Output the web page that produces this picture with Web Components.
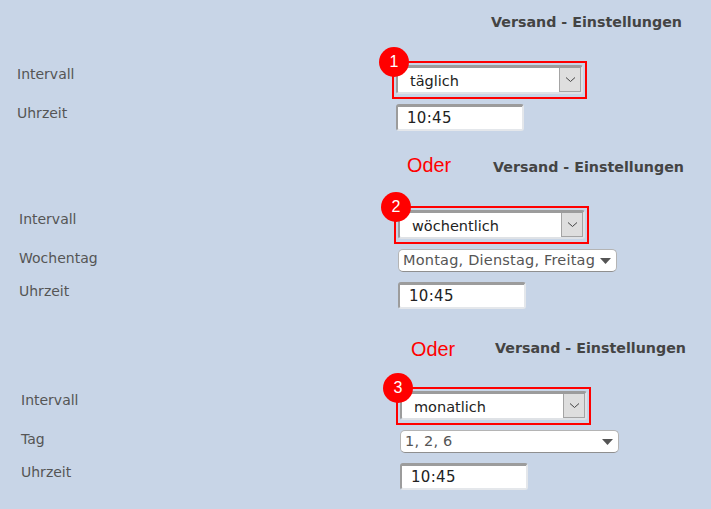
<!DOCTYPE html>
<html lang="de">
<head>
<meta charset="utf-8">
<title>Versand - Einstellungen</title>
<style>
  html, body { margin: 0; background: #c8d5e7; }
  body { width: 711px; height: 509px; overflow: hidden; font-family: "DejaVu Sans", Verdana, sans-serif; }
  main { display: flex; flex-direction: column; padding-top: 10px; }
  send-settings.second { margin: 24px 0 0 2px; --oder-gap: 7px; --oder-shift: -4px; }
  send-settings.third { margin: 27px 0 0 4px; --oder-gap: 9px; --oder-shift: 3px; }
</style>
</head>
<body>
<main>
  <send-settings>
    <setting-row label="Intervall" first><combo-select badge="1">täglich</combo-select></setting-row>
    <setting-row label="Uhrzeit"><time-field>10:45</time-field></setting-row>
  </send-settings>

  <send-settings class="second" oder>
    <setting-row label="Intervall" first><combo-select badge="2">wöchentlich</combo-select></setting-row>
    <setting-row label="Wochentag"><multi-select>Montag, Dienstag, Freitag</multi-select></setting-row>
    <setting-row label="Uhrzeit" spaced><time-field>10:45</time-field></setting-row>
  </send-settings>

  <send-settings class="third" oder>
    <setting-row label="Intervall" first><combo-select badge="3">monatlich</combo-select></setting-row>
    <setting-row label="Tag"><multi-select>1, 2, 6</multi-select></setting-row>
    <setting-row label="Uhrzeit" spaced><time-field>10:45</time-field></setting-row>
  </send-settings>
</main>

<script>
// One "Versand - Einstellungen" block: heading line, then the rows
class SendSettings extends HTMLElement {
  constructor() {
    super();
    this.attachShadow({ mode: 'open' });
  }

  connectedCallback() {
    const oder = this.hasAttribute('oder') ? '<span class="oder">Oder</span>' : '';
    this.shadowRoot.innerHTML = `
      <style>
        :host {
          display: flex;
          flex-direction: column;
          width: 682px;
        }
        .head {
          display: flex;
          align-items: center;
          height: 24px;
          margin-bottom: 27px;
          padding-left: 398px;
          box-sizing: border-box;
        }
        .oder {
          margin-left: var(--oder-gap, 9px);
          margin-top: var(--oder-shift, -4px);
          font: 19.8px "Liberation Sans", Arial, sans-serif;
          color: #ff0000;
        }
        h2 {
          margin: 0 0 0 auto;
          font: bold 14.25px "DejaVu Sans", Verdana, sans-serif;
          color: #444444;
          white-space: nowrap;
        }
        .rows {
          display: flex;
          flex-direction: column;
          gap: 5px;
        }
      </style>
      <div class="head">${oder}<h2>Versand - Einstellungen</h2></div>
      <div class="rows"><slot></slot></div>
    `;
  }
}

// Label on the left, control in the right column
class SettingRow extends HTMLElement {
  constructor() {
    super();
    this.attachShadow({ mode: 'open' });
  }

  connectedCallback() {
    this.shadowRoot.innerHTML = `
      <style>
        :host {
          display: grid;
          grid-template-columns: 375px auto;
          padding-left: 17px;
        }
        :host([spaced]) { margin-top: 5px; }
        .label {
          font-size: 14px;
          line-height: 18px;
          color: #555555;
        }
        :host([first]) .label { padding-top: 4px; }
      </style>
      <div class="label">${this.getAttribute('label')}</div>
      <div><slot></slot></div>
    `;
  }
}

// Marked-up dropdown: red frame, numbered badge, field with chevron button
class ComboSelect extends HTMLElement {
  constructor() {
    super();
    this.attachShadow({ mode: 'open' });
  }

  connectedCallback() {
    this.shadowRoot.innerHTML = `
      <style>
        :host {
          display: block;
          position: relative;
          width: 195px;
          height: 38px;
          box-sizing: border-box;
          border: 2px solid #ff0000;
          padding: 2px 2px;
        }
        .badge {
          position: absolute;
          left: -15px;
          top: -16px;
          width: 30px;
          height: 30px;
          border-radius: 50%;
          background: #ff0000;
          color: #ffffff;
          font: 16px/30px "Liberation Sans", Arial, sans-serif;
          text-align: center;
        }
        .field {
          display: flex;
          align-items: stretch;
          height: 29px;
          box-sizing: border-box;
          border-style: solid;
          border-width: 3px 2px 2px 2px;
          border-color: #9c9c9c #dfe2e6 #dfe2e6 #9c9c9c;
          border-radius: 3px;
          background: #ffffff;
        }
        .text {
          flex: 1;
          padding-left: 12px;
          font-size: 14.5px;
          line-height: 27px;
          color: #222222;
        }
        .btn {
          display: flex;
          align-items: center;
          justify-content: center;
          width: 20px;
          border: 1px solid #a4a4a4;
          border-top: 0;
          background: #dedede;
        }
      </style>
      <span class="badge">${this.getAttribute('badge')}</span>
      <div class="field">
        <div class="text"><slot></slot></div>
        <div class="btn">
          <svg width="11" height="7" viewBox="0 0 11 7"><path d="M1 1.5 L5.5 5.5 L10 1.5" fill="none" stroke="#444" stroke-width="1"/></svg>
        </div>
      </div>
    `;
  }
}

// Rounded multi-value dropdown with a solid caret
class MultiSelect extends HTMLElement {
  constructor() {
    super();
    this.attachShadow({ mode: 'open' });
  }

  connectedCallback() {
    this.shadowRoot.innerHTML = `
      <style>
        :host {
          display: flex;
          align-items: center;
          justify-content: space-between;
          width: 219px;
          height: 23px;
          box-sizing: border-box;
          margin-left: 4px;
          padding: 0 5px 2px 4px;
          border: 1px solid #b4b4b4;
          border-bottom-color: #8f8f8f;
          border-radius: 5px;
          background: #ffffff;
          font-size: 14.5px;
          letter-spacing: 0.2px;
          color: #555555;
          white-space: nowrap;
        }
        svg { flex: none; margin-top: 2px; }
      </style>
      <span><slot></slot></span>
      <svg width="11" height="6" viewBox="0 0 11 6"><path d="M0 0 H11 L5.5 6 Z" fill="#555"/></svg>
    `;
  }
}

// Time input with the old inset border
class TimeField extends HTMLElement {
  constructor() {
    super();
    this.attachShadow({ mode: 'open' });
  }

  connectedCallback() {
    this.shadowRoot.innerHTML = `
      <style>
        :host {
          display: block;
          width: 128px;
          height: 27px;
          box-sizing: border-box;
          margin-left: 4px;
          padding-left: 9px;
          border-style: solid;
          border-width: 3px 2px 2px 2px;
          border-color: #9c9c9c #e4e7eb #e4e7eb #9c9c9c;
          border-radius: 3px;
          background: #ffffff;
          font-size: 15px;
          letter-spacing: 0.3px;
          line-height: 22px;
          color: #222222;
        }
      </style>
      <slot></slot>
    `;
  }
}

customElements.define('send-settings', SendSettings);
customElements.define('setting-row', SettingRow);
customElements.define('combo-select', ComboSelect);
customElements.define('multi-select', MultiSelect);
customElements.define('time-field', TimeField);
</script>
</body>
</html>
